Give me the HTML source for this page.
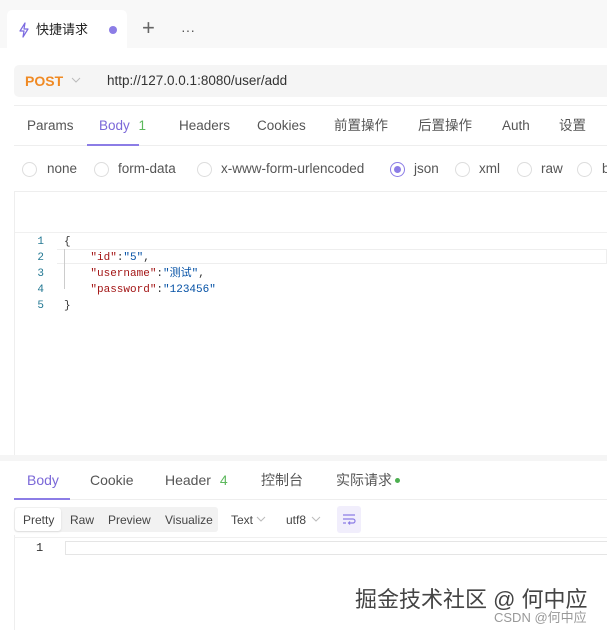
<!DOCTYPE html>
<html><head><meta charset="utf-8"><style>
*{margin:0;padding:0;box-sizing:border-box}
body{width:607px;height:630px;overflow:hidden;background:#fff;font-family:"Liberation Sans","Noto Sans CJK SC",sans-serif;font-size:13.5px;color:#333;position:relative}
.a{position:absolute;white-space:nowrap;line-height:16px}
.mono{font-family:"Liberation Mono","Noto Sans CJK SC",monospace;font-size:11px}
.r{position:absolute;width:15px;height:15px;border:1px solid #ddd;border-radius:50%;top:162px}
</style></head><body>
<div class="a" style="left:0;top:0;width:607px;height:48px;background:#f8f8f8"></div>
<div class="a" style="left:7px;top:10px;width:120px;height:40px;background:#fff;border-radius:5px 5px 0 0"></div>
<svg class="a" style="left:17px;top:22px" width="14" height="16" viewBox="0 0 14 16"><path d="M8 1L3 9h4l-1 6 5-8H7z" fill="none" stroke="#7b6ae0" stroke-width="1.2" stroke-linejoin="round"/></svg>
<div class="a" style="left:36px;top:22px;font-size:13px;color:#222">快捷请求</div>
<div class="a" style="left:109px;top:26px;width:8px;height:8px;border-radius:50%;background:#8c7de6"></div>
<div class="a" style="left:142px;top:20px;font-size:22px;color:#666;font-weight:300">+</div>
<div class="a" style="left:181px;top:22px;font-size:14px;color:#555">···</div>
<div class="a" style="left:14px;top:65px;width:600px;height:32px;background:#f5f5f5;border-radius:5px"></div>
<div class="a" style="left:25px;top:73px;color:#f08a24;font-weight:bold;font-size:14px">POST</div>
<svg class="a" style="left:71px;top:77px" width="10" height="7"><path d="M1 1l4 4 4-4" fill="none" stroke="#bbb"/></svg>
<div class="a" style="left:107px;top:73px;font-size:13.5px;color:#333">http://127.0.0.1:8080/user/add</div>
<div class="a" style="left:14px;top:105px;width:593px;height:1px;background:#eee"></div>
<div class="a" style="left:27px;top:118px;color:#555">Params</div>
<div class="a" style="left:99px;top:118px;color:#7b68d8">Body <span style="color:#5cb85c;margin-left:5px">1</span></div>
<div class="a" style="left:179px;top:118px;color:#555">Headers</div>
<div class="a" style="left:257px;top:118px;color:#555">Cookies</div>
<div class="a" style="left:334px;top:118px;color:#555">前置操作</div>
<div class="a" style="left:418px;top:118px;color:#555">后置操作</div>
<div class="a" style="left:502px;top:118px;color:#555">Auth</div>
<div class="a" style="left:559px;top:118px;color:#555">设置</div>
<div class="a" style="left:14px;top:145px;width:593px;height:1px;background:#eee"></div>
<div class="a" style="left:87px;top:144px;width:52px;height:2px;background:#8c7de6"></div>
<div class="r" style="left:22px"></div><div class="a" style="left:47px;top:161px;color:#555">none</div>
<div class="r" style="left:94px"></div><div class="a" style="left:118px;top:161px;color:#555">form-data</div>
<div class="r" style="left:197px"></div><div class="a" style="left:221px;top:161px;color:#555">x-www-form-urlencoded</div>
<div class="r" style="left:390px;border-color:#8c7de6"></div><div class="a" style="left:394px;top:166px;width:7px;height:7px;border-radius:50%;background:#8c7de6"></div><div class="a" style="left:414px;top:161px;color:#555">json</div>
<div class="r" style="left:455px"></div><div class="a" style="left:479px;top:161px;color:#555">xml</div>
<div class="r" style="left:517px"></div><div class="a" style="left:541px;top:161px;color:#555">raw</div>
<div class="r" style="left:577px"></div><div class="a" style="left:602px;top:161px;color:#555">b</div>
<div class="a" style="left:14px;top:191px;width:593px;height:264px;border-left:1px solid #eee;border-top:1px solid #eee"></div>
<div class="a" style="left:15px;top:232px;width:592px;height:1px;background:#f0f0f0"></div>
<div class="a" style="left:57px;top:249px;width:550px;height:15px;border:1px solid #eee;border-left:none"></div>
<div class="a" style="left:64px;top:249px;width:1px;height:40px;background:#ccc"></div>
<div class="mono a" style="left:36px;top:234px;line-height:16px;color:#237893;text-align:right;width:8px">1<br>2<br>3<br>4<br>5</div>
<div class="mono a" style="left:64px;top:234px;line-height:16px;color:#333"><pre style="font:inherit;line-height:16px">{
    <span style="color:#a31515">"id"</span>:<span style="color:#0451a5">"5"</span>,
    <span style="color:#a31515">"username"</span>:<span style="color:#0451a5">"测试"</span>,
    <span style="color:#a31515">"password"</span>:<span style="color:#0451a5">"123456"</span>
}</pre></div>
<div class="a" style="left:0;top:455px;width:607px;height:6px;background:#f5f5f5"></div>
<div class="a" style="left:27px;top:472px;color:#7b68d8;font-size:14px">Body</div>
<div class="a" style="left:90px;top:472px;color:#555;font-size:14px">Cookie</div>
<div class="a" style="left:165px;top:472px;color:#555;font-size:14px">Header <span style="color:#5cb85c;margin-left:5px">4</span></div>
<div class="a" style="left:261px;top:472px;color:#555;font-size:14px">控制台</div>
<div class="a" style="left:336px;top:472px;color:#555;font-size:14px">实际请求</div>
<div class="a" style="left:395px;top:478px;width:5px;height:5px;border-radius:50%;background:#4caf50"></div>
<div class="a" style="left:14px;top:499px;width:593px;height:1px;background:#eee"></div>
<div class="a" style="left:14px;top:498px;width:56px;height:2px;background:#8c7de6"></div>
<div class="a" style="left:14px;top:507px;width:204px;height:25px;background:#f2f2f2;border-radius:3px"></div>
<div class="a" style="left:15px;top:508px;width:46px;height:23px;background:#fff;border-radius:3px;box-shadow:0 1px 2px rgba(0,0,0,.1)"></div>
<div class="a" style="left:23px;top:512px;font-size:12px;color:#444">Pretty</div>
<div class="a" style="left:70px;top:512px;font-size:12px;color:#444">Raw</div>
<div class="a" style="left:108px;top:512px;font-size:12px;color:#444">Preview</div>
<div class="a" style="left:165px;top:512px;font-size:12px;color:#444">Visualize</div>
<div class="a" style="left:231px;top:512px;font-size:12px;color:#444">Text</div>
<svg class="a" style="left:256px;top:516px" width="10" height="7"><path d="M1 1l4 4 4-4" fill="none" stroke="#bbb"/></svg>
<div class="a" style="left:286px;top:512px;font-size:12px;color:#444">utf8</div>
<svg class="a" style="left:311px;top:516px" width="10" height="7"><path d="M1 1l4 4 4-4" fill="none" stroke="#bbb"/></svg>
<div class="a" style="left:337px;top:506px;width:24px;height:27px;background:#f1eefc;border-radius:3px"></div>
<svg class="a" style="left:342px;top:512px" width="14" height="14" viewBox="0 0 14 14"><path d="M1 3h12M1 7h10a2 2 0 010 4H7M1 11h3M8 9.5L6.5 11 8 12.5" fill="none" stroke="#8c7de6" stroke-width="1.2"/></svg>
<div class="a" style="left:14px;top:535px;width:1px;height:95px;background:#eee"></div>
<div class="a" style="left:14px;top:537px;width:593px;height:1px;background:#f0f0f0"></div>
<div class="a" style="left:65px;top:541px;width:542px;height:14px;border:1px solid #e5e5e5;border-right:none"></div>
<div class="mono a" style="left:36px;top:540px;color:#333;font-size:12px">1</div>
<div class="a" style="left:355px;top:588px;font-size:22px;line-height:24px;color:#444;text-shadow:0 0 2px #fff,0 0 1px #fff">掘金技术社区 @ 何中应</div>
<div class="a" style="left:494px;top:610px;font-size:13px;color:#999">CSDN @何中应</div>
</body></html>
